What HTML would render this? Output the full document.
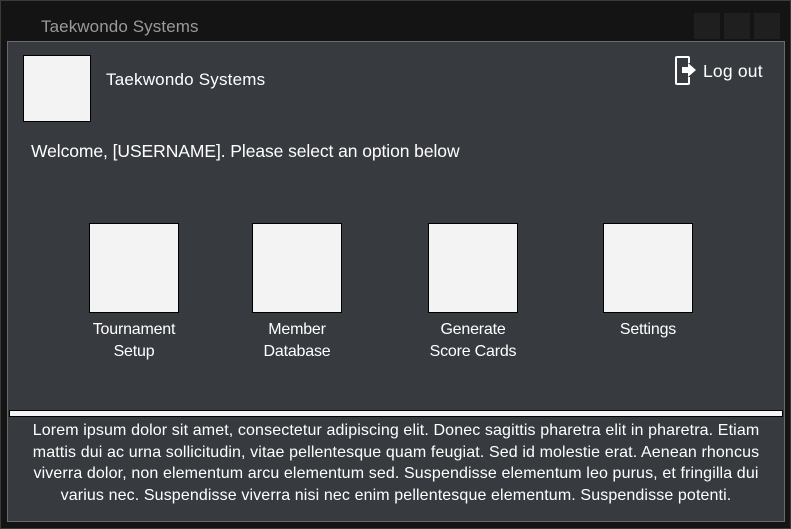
<!DOCTYPE html>
<html><head><style>
*{margin:0;padding:0;box-sizing:border-box}
body{width:791px;height:529px;background:#141414;font-family:"Liberation Sans",sans-serif;color:#fff;position:relative;overflow:hidden}
.win{position:absolute;left:0;top:0;width:791px;height:529px;border:1px solid #3a3a3a}
.title{position:absolute;left:40px;top:16px;font-size:17px;color:#9a9a9a;letter-spacing:0.1px}
.wb{position:absolute;top:12px;width:26px;height:26px;background:#1f1f1f}
.panel{position:absolute;left:7px;top:41px;width:778px;height:481px;background:#373a3f;border:1px solid #6a6a6a}
.abs{position:absolute}
.box{position:absolute;background:#f3f3f3;border:1px solid #000}
.lbl{position:absolute;width:140px;text-align:center;font-size:16px;line-height:22px;letter-spacing:-0.2px}
.sep{position:absolute;left:1px;top:368px;width:774px;height:7px;background:#f3f3f3;border:1px solid #000}
.para{position:absolute;left:0;top:378px;width:776px;text-align:center;font-size:16px;line-height:21.5px;letter-spacing:0.12px;white-space:nowrap}
</style></head><body>
<div class="win">
<div class="title">Taekwondo Systems</div>
<div class="wb" style="left:693px"></div><div class="wb" style="left:723px"></div><div class="wb" style="left:753px"></div>
</div>
<div class="panel">
<div class="box" style="left:15px;top:13px;width:68px;height:67px"></div>
<div class="abs" style="left:98px;top:28px;font-size:17px;letter-spacing:0.2px">Taekwondo Systems</div>
<svg class="abs" style="left:666px;top:13px" width="26" height="32" viewBox="0 0 26 32">
<path d="M15 8 V3 Q15 2 14 2 H3 Q2 2 2 3 V28 Q2 29 3 29 H14 Q15 29 15 28 V22" fill="none" stroke="#fff" stroke-width="2"/>
<path d="M8 12 H14 V8 L22 15 L14 22 V18 H8 Z" fill="#fff"/>
</svg>
<div class="abs" style="left:695px;top:19px;font-size:17.5px;letter-spacing:0.2px">Log out</div>
<div class="abs" style="left:23px;top:99px;font-size:17.5px;letter-spacing:-0.08px">Welcome, [USERNAME]. Please select an option below</div>
<div class="box" style="left:81px;top:181px;width:90px;height:90px"></div>
<div class="box" style="left:244px;top:181px;width:90px;height:90px"></div>
<div class="box" style="left:420px;top:181px;width:90px;height:90px"></div>
<div class="box" style="left:595px;top:181px;width:90px;height:90px"></div>
<div class="lbl" style="left:56px;top:277px">Tournament<br>Setup</div>
<div class="lbl" style="left:219px;top:277px">Member<br>Database</div>
<div class="lbl" style="left:395px;top:277px">Generate<br>Score Cards</div>
<div class="lbl" style="left:570px;top:277px">Settings</div>
<div class="sep"></div>
<div class="para">Lorem ipsum dolor sit amet, consectetur adipiscing elit. Donec sagittis pharetra elit in pharetra. Etiam<br>mattis dui ac urna sollicitudin, vitae pellentesque quam feugiat. Sed id molestie erat. Aenean rhoncus<br>viverra dolor, non elementum arcu elementum sed. Suspendisse elementum leo purus, et fringilla dui<br>varius nec. Suspendisse viverra nisi nec enim pellentesque elementum. Suspendisse potenti.</div>
</div>
</body></html>
